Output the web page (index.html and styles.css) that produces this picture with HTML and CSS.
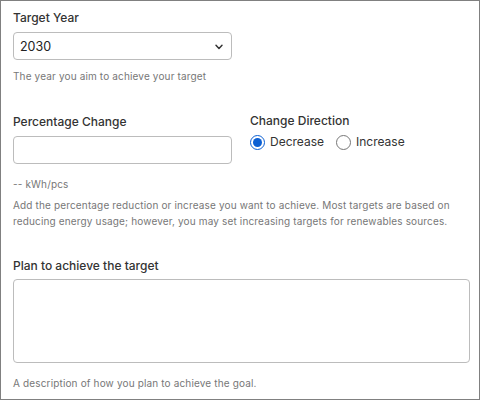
FILE: index.html
```html
<!DOCTYPE html>
<html lang="en">
<head>
<meta charset="utf-8" />
<meta name="viewport" content="width=device-width, initial-scale=1" />
<title>Target Settings</title>
<link rel="stylesheet" href="styles.css">
</head>
<body>
  <form class="panel" aria-label="Target settings">
    <div class="field">
      <label class="field-label" for="targetYear">Target Year</label>
      <div class="select-wrap">
        <select id="targetYear" class="control">
          <option>2030</option>
          <option>2035</option>
          <option>2040</option>
          <option>2050</option>
        </select>
        <svg class="chevron" width="10" height="6" viewBox="0 0 10 6" aria-hidden="true">
          <path d="M2 1.3 5 4.4 8 1.3" fill="none" stroke="#333" stroke-width="1.5" stroke-linecap="round" stroke-linejoin="round" />
        </svg>
      </div>
      <p class="help">The year you aim to achieve your target</p>
    </div>

    <div class="field">
      <div class="row">
        <div>
          <label class="field-label" for="pctChange">Percentage Change</label>
          <input type="text" id="pctChange" class="control" />
        </div>
        <div class="direction">
          <span class="field-label">Change Direction</span>
          <div class="radios">
            <label class="radio"><input type="radio" name="direction" checked /> Decrease</label>
            <label class="radio"><input type="radio" name="direction" /> Increase</label>
          </div>
        </div>
      </div>
      <p class="help unit">-- kWh/pcs</p>
      <p class="help long">Add the percentage reduction or increase you want to achieve. Most targets are based on reducing energy usage; however, you may set increasing targets for renewables sources.</p>
    </div>

    <div class="field">
      <label class="field-label plan-label" for="plan">Plan to achieve the target</label>
      <textarea id="plan" class="control area"></textarea>
      <p class="help plan-help">A description of how you plan to achieve the goal.</p>
    </div>
  </form>
</body>
</html>
```

FILE: styles.css
```css
html, body {
  margin: 0;
  padding: 0;
  background: #fff;
}
body {
  font-family: Inter, "Noto Sans", Arial, sans-serif;
  color: #333;
}
.panel {
  box-sizing: border-box;
  width: 480px;
  height: 400px;
  border: 1px solid #808080;
  padding: 9px 9px 0 12px;
  overflow: hidden;
}
.field {
  margin-bottom: 31px;
}
.field:nth-child(2) {
  margin-bottom: 29px;
}
.field-label {
  display: block;
  font-size: 12px;
  font-weight: 500;
  line-height: 16px;
  color: #333;
  margin-bottom: 6px;
}
.control {
  box-sizing: border-box;
  display: block;
  width: 100%;
  height: 28px;
  border: 1px solid #bcbcbc;
  border-radius: 4px;
  background: #fff;
  font-family: inherit;
  font-size: 12.5px;
  color: #222;
  padding: 0 6px;
  outline: none;
}
.select-wrap {
  position: relative;
  width: 219px;
}
select.control {
  appearance: none;
  -webkit-appearance: none;
}
.chevron {
  position: absolute;
  right: 8px;
  top: 12px;
  pointer-events: none;
}
.help {
  margin: 9px 0 0;
  font-size: 10px;
  line-height: 14px;
  color: #777;
  letter-spacing: 0.15px;
}
.row {
  display: grid;
  grid-template-columns: 219px 1fr;
  column-gap: 18px;
}
.direction .field-label {
  margin-top: -1px;
  margin-bottom: 5px;
}
.radios {
  display: flex;
  gap: 12px;
}
.radio {
  display: flex;
  align-items: center;
  gap: 5px;
  font-size: 12px;
  line-height: 16px;
  color: #333;
}
.radio input {
  margin: 0;
  width: 15px;
  height: 15px;
  accent-color: #0b5fd3;
}
.unit {
  margin-top: 13px;
}
.long {
  margin-top: 6px;
  line-height: 16px;
}
.plan-label {
  margin-bottom: 5px;
}
.area {
  height: 84px;
  resize: none;
}
.plan-help {
  margin-top: 13px;
}
```
